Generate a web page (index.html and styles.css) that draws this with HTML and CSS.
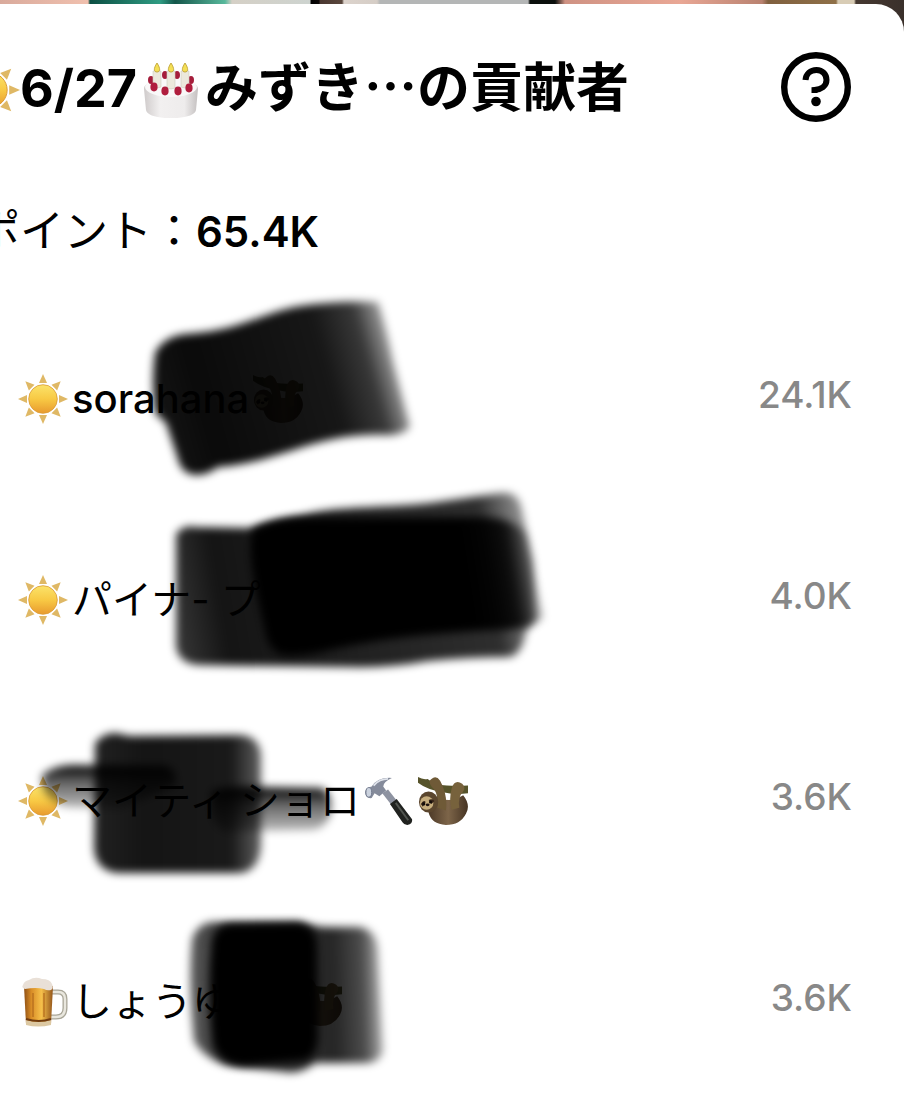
FILE: index.html
```html
<!DOCTYPE html>
<html lang="ja">
<head>
    <meta charset="UTF-8">
    <meta name="viewport" content="width=device-width, initial-scale=1.0">
    <title>貢献者</title>
    <link rel="stylesheet" href="styles.css">
</head>
<body>

    <!-- shared emoji and gradients -->
    <svg class="defs" aria-hidden="true">
        <defs>
            <linearGradient id="sun-face" x1="0" y1="0" x2="0" y2="1">
                <stop offset="0" stop-color="#fbe36a"/>
                <stop offset="0.5" stop-color="#f8c944"/>
                <stop offset="1" stop-color="#e89a2e"/>
            </linearGradient>
            <linearGradient id="beer-fill" x1="0" y1="0" x2="1" y2="0">
                <stop offset="0" stop-color="#8f5015"/>
                <stop offset="0.25" stop-color="#d88c26"/>
                <stop offset="0.6" stop-color="#f6c04a"/>
                <stop offset="1" stop-color="#93551b"/>
            </linearGradient>
            <linearGradient id="cake-side" x1="0" y1="0" x2="1" y2="0">
                <stop offset="0" stop-color="#cfcbcb"/>
                <stop offset="0.3" stop-color="#f2f0f0"/>
                <stop offset="0.75" stop-color="#eeecec"/>
                <stop offset="1" stop-color="#c4c0c0"/>
            </linearGradient>
            <linearGradient id="sloth-body" x1="0" y1="0" x2="1" y2="0">
                <stop offset="0" stop-color="#4d3a28"/>
                <stop offset="0.5" stop-color="#7d6549"/>
                <stop offset="1" stop-color="#463423"/>
            </linearGradient>
            <filter id="soft" x="-20%" y="-40%" width="140%" height="180%">
                <feGaussianBlur stdDeviation="4"/>
            </filter>

            <symbol id="sun" viewBox="0 0 50 50">
                <g fill="#dfb865">
                    <path id="ray" d="M25 0l4 9h-8z"/>
                    <use href="#ray" transform="rotate(45 25 25)"/>
                    <use href="#ray" transform="rotate(90 25 25)"/>
                    <use href="#ray" transform="rotate(135 25 25)"/>
                    <use href="#ray" transform="rotate(180 25 25)"/>
                    <use href="#ray" transform="rotate(225 25 25)"/>
                    <use href="#ray" transform="rotate(270 25 25)"/>
                    <use href="#ray" transform="rotate(315 25 25)"/>
                </g>
                <circle cx="25" cy="25" r="14.3" fill="url(#sun-face)" stroke="#d99a35" stroke-width="0.8"/>
            </symbol>

            <symbol id="cake" viewBox="0 0 56 56">
                <path d="M1 27c0-14 54-14 54 0l-2 21c-1 11-49 11-50 0z" fill="url(#cake-side)"/>
                <ellipse cx="28" cy="25" rx="26" ry="10" fill="#f9f8f8"/>
                <g fill="#a51d3b">
                    <ellipse cx="22" cy="13" rx="3" ry="4"/>
                    <ellipse cx="34" cy="13" rx="3" ry="4"/>
                    <ellipse cx="8" cy="18" rx="3" ry="4"/>
                    <ellipse cx="48" cy="18" rx="3" ry="4"/>
                </g>
                <g fill="#ece9dc" stroke="#cfccc0" stroke-width="0.6">
                    <path d="M10 9h8v16q-4 2-8 0z"/>
                    <path d="M24 9h8v17q-4 2-8 0z"/>
                    <path d="M38 9h8v16q-4 2-8 0z"/>
                </g>
                <g fill="#f4df55" stroke="#b89a2b" stroke-width="0.8">
                    <path d="M14 1c4 6 3 9 0 9s-4-3 0-9z"/>
                    <path d="M28 1c4 6 3 9 0 9s-4-3 0-9z"/>
                    <path d="M42 1c4 6 3 9 0 9s-4-3 0-9z"/>
                </g>
                <g fill="#b01e3e">
                    <ellipse cx="11" cy="25" rx="3.6" ry="4.4"/>
                    <ellipse cx="22" cy="29" rx="3.6" ry="4.4"/>
                    <ellipse cx="35" cy="29" rx="3.6" ry="4.4"/>
                    <ellipse cx="46" cy="26" rx="3.6" ry="4.4"/>
                </g>
            </symbol>

            <symbol id="beer" viewBox="0 0 50 50">
                <path d="M32 15h8q7 0 7 7v9q0 9-9 9h-6" fill="none" stroke="#a9a698" stroke-width="5"/>
                <path d="M32 15h8q7 0 7 7v9q0 9-9 9h-6" fill="none" stroke="#e9e7de" stroke-width="2.4"/>
                <path d="M6 9h29l-2 38q-13 4-25 0z" fill="url(#beer-fill)"/>
                <path d="M8 43q13 4 25 0v5q-13 3-25 0z" fill="#dcc8a2"/>
                <path d="M8 42q13 4 25 0" fill="none" stroke="#6f3b10" stroke-width="2"/>
                <path d="M15 16v24M26 16v24" stroke="#b8701f" stroke-width="1.4"/>
                <path d="M5 8q1-4 6-5 6-4 13-1 8 0 10 5 2 4-1 6-4 1-7-1-8-2-19 0-4-1-2-4z" fill="#e9e0d7"/>
            </symbol>

            <symbol id="hammer" viewBox="0 0 52 52">
                <path d="M19 18l6-4 11 14-6 4z" fill="#8e93a1"/>
                <path d="M27 29l7-5 16 21q1 5-5 6-3 0-5-3z" fill="#20221f"/>
                <path d="M33 28l13 18" stroke="#515550" stroke-width="2"/>
                <path d="M8 11Q14 1 29 2q-9 4-9 9l3 4-7 6-5-3-3 5q-6 1-7-6 1-5 7-6z" fill="#858b9b"/>
                <path d="M10 10Q16 3 25 3" fill="none" stroke="#dfe3eb" stroke-width="2"/>
                <ellipse cx="5" cy="17" rx="3" ry="5" fill="#cbd2de" stroke="#70798c"/>
            </symbol>

            <symbol id="sloth" viewBox="0 0 52 52">
                <path d="M0 1q5 3 10 2 7 6 20 7 10 1 22 0v8q-14 2-26-1Q9 14 0 7z" fill="#56532a"/>
                <path d="M20 20q10 10 27 0 8 10 3 19-6 12-21 12-15-1-18-13z" fill="url(#sloth-body)"/>
                <path d="M14 3q-4 2 0 8 8 7 6 22l9 3q2-17-6-31-4-6-9-2z" fill="#6f5a37"/>
                <path d="M46 8q-8-5-11 5-3 10 0 22l8-2q-2-11 4-17 3-4-1-8z" fill="#77623c"/>
                <ellipse cx="11" cy="27" rx="10" ry="11" fill="#5b462e"/>
                <ellipse cx="9" cy="28" rx="7" ry="7" fill="#c6ad7d"/>
                <path d="M3 29q3-5 5-2l-3 5zM11 25q4-2 6 1l-3 3z" fill="#352318"/>
                <circle cx="6" cy="29" r="1.6" fill="#130c08"/>
                <circle cx="13" cy="27" r="1.6" fill="#130c08"/>
                <ellipse cx="10" cy="30" rx="2" ry="1.5" fill="#21140f"/>
            </symbol>
        </defs>
    </svg>

    <main class="sheet">
        <header class="header">
            <h1 class="title">
                <svg class="title-sun"><use href="#sun"/></svg>
                <span>6/27</span>
                <svg class="title-cake"><use href="#cake"/></svg>
                <span class="title-name">みずき…の貢献者</span>
            </h1>
            <button class="help" type="button" aria-label="ヘルプ">
                <svg viewBox="0 0 70 70" fill="none" stroke="#000">
                    <circle cx="35" cy="35" r="31.8" stroke-width="6.4"/>
                    <path d="M24.500 28C25 22 29.500 18 35.500 18S45.500 22.500 45.500 28C45.500 34 40 37.500 33.500 38L33.500 41" stroke-width="6"/>
                    <circle cx="35" cy="49.500" r="4.800" fill="#000" stroke="none"/>
                </svg>
            </button>
        </header>

        <p class="points">ポイント：<strong>65.4K</strong></p>

        <ul class="list">
            <li class="row">
                <span class="name">
                    <svg class="emoji"><use href="#sun"/></svg>
                    <span>sorahana</span>
                    <svg class="emoji"><use href="#sloth"/></svg>
                </span>
                <span class="value">24.1K</span>
                <svg class="marker" viewBox="0 297 560 201">
                    <defs>
                        <linearGradient id="fade-1" gradientUnits="userSpaceOnUse" x1="155" y1="420" x2="402" y2="351">
                            <stop offset="0" stop-opacity="0.92"/>
                            <stop offset="0.2" stop-opacity="0.96"/>
                            <stop offset="0.7" stop-opacity="0.91"/>
                            <stop offset="0.86" stop-opacity="0.78"/>
                            <stop offset="1" stop-opacity="0.25"/>
                        </linearGradient>
                    </defs>
                    <path filter="url(#soft)" fill="url(#fade-1)" d="M155 352Q163 336 185 333C240 330 260 312 300 305Q340 299 378 301Q386 325 393 360L410 426Q402 435 385 434C330 432 300 449 260 459Q235 465 218 466Q203 477 190 473Q180 470 177 455L166 422L155 412Q151 380 155 352z"/>
                </svg>
            </li>
            <li class="row">
                <span class="name">
                    <svg class="emoji"><use href="#sun"/></svg>
                    <span class="kana">パイナ- プ</span>
                </span>
                <span class="value">4.0K</span>
                <svg class="marker" viewBox="0 498 560 201">
                    <defs>
                        <linearGradient id="fade-2" gradientUnits="userSpaceOnUse" x1="175" y1="600" x2="540" y2="540">
                            <stop offset="0" stop-opacity="0.8"/>
                            <stop offset="0.12" stop-opacity="0.92"/>
                            <stop offset="0.85" stop-opacity="0.82"/>
                            <stop offset="1" stop-opacity="0.3"/>
                        </linearGradient>
                        <linearGradient id="fade-2b" gradientUnits="userSpaceOnUse" x1="470" y1="590" x2="540" y2="579">
                            <stop offset="0" stop-opacity="1"/>
                            <stop offset="0.6" stop-opacity="0.85"/>
                            <stop offset="1" stop-opacity="0.2"/>
                        </linearGradient>
                    </defs>
                    <path filter="url(#soft)" fill="url(#fade-2)" d="M176 533Q184 523 195 526L250 527Q275 518 303 514C340 504 390 507 430 502L500 492Q517 490 521 505L533 560L535 620L526 630Q522 655 508 656Q470 656 428 660Q390 667 350 666L200 664Q178 663 176 645z"/>
                    <path filter="url(#soft)" fill="url(#fade-2b)" d="M252 530Q270 518 303 517L480 516Q517 517 526 535L543 617Q525 630 500 629C420 632 370 640 330 649Q305 656 282 654Q270 650 266 635L256 590Q248 550 252 530z"/>
                </svg>
            </li>
            <li class="row">
                <span class="name">
                    <svg class="emoji"><use href="#sun"/></svg>
                    <span class="kana">マイティ ショロ</span>
                    <svg class="emoji"><use href="#hammer"/></svg>
                    <svg class="emoji"><use href="#sloth"/></svg>
                </span>
                <span class="value">3.6K</span>
                <svg class="marker" viewBox="0 699 560 201">
                    <defs>
                        <linearGradient id="fade-3" x1="0" y1="0" x2="1" y2="0">
                            <stop offset="0" stop-opacity="0.87"/>
                            <stop offset="0.3" stop-opacity="0.92"/>
                            <stop offset="0.82" stop-opacity="0.9"/>
                            <stop offset="1" stop-opacity="0.62"/>
                        </linearGradient>
                        <linearGradient id="fade-arm" x1="0" y1="0" x2="0" y2="1">
                            <stop offset="0" stop-opacity="1"/>
                            <stop offset="0.4" stop-opacity="0.6"/>
                            <stop offset="1" stop-opacity="0.25"/>
                        </linearGradient>
                    </defs>
                    <path filter="url(#soft)" fill="url(#fade-arm)" d="M42 774Q55 764 72 764L165 765Q178 768 175 785L120 808L65 806Q40 797 42 774z"/>
                    <path filter="url(#soft)" fill="url(#fade-arm)" d="M212 790Q225 785 260 786L320 787Q333 790 331 812Q325 828 312 829L225 831Q208 824 212 790z"/>
                    <path filter="url(#soft)" fill="url(#fade-3)" d="M95 742Q104 731 116 732L130 735L240 734Q260 735 261 755L261 845Q259 870 240 872L118 872Q96 870 94 848z"/>
                </svg>
            </li>
            <li class="row">
                <span class="name">
                    <svg class="emoji"><use href="#beer"/></svg>
                    <span class="kana covered">しょうゆ</span>
                    <svg class="emoji"><use href="#sloth"/></svg>
                </span>
                <span class="value">3.6K</span>
                <svg class="marker" viewBox="0 900 560 201">
                    <defs>
                        <linearGradient id="fade-4" gradientUnits="userSpaceOnUse" x1="190" y1="990" x2="382" y2="984">
                            <stop offset="0" stop-opacity="0.65"/>
                            <stop offset="0.2" stop-opacity="0.8"/>
                            <stop offset="0.75" stop-opacity="0.85"/>
                            <stop offset="0.9" stop-opacity="0.7"/>
                            <stop offset="1" stop-opacity="0.3"/>
                        </linearGradient>
                    </defs>
                    <path filter="url(#soft)" fill="url(#fade-4)" d="M192 938Q198 921 215 921L300 921Q315 926 330 926L358 926Q377 928 378 950L383 1050Q380 1062 365 1062L315 1062Q300 1074 285 1071L225 1064Q203 1056 194 1040Q188 980 192 938z"/>
                    <path filter="url(#soft)" d="M212 942Q214 924 232 923L298 922Q317 925 317 945L318 1038Q316 1059 300 1060L245 1065Q222 1065 213 1045Q207 990 212 942z"/>
                </svg>
            </li>
        </ul>
    </main>

</body>
</html>
```
FILE: styles.css
```css
* {
    box-sizing: border-box;
    margin: 0;
    padding: 0;
}

/* sliver of the live video that shows above the sheet */
body {
    padding-top: 4px;
    color: #000;
    font-family: Inter, "Noto Sans CJK JP", sans-serif;
    background: linear-gradient(90deg,
        #d9aa9c 0, #f0c0ae 88px,
        #0c4f43 90px, #2f9c83 160px, #14564a 175px, #58b99c 225px,
        #d5d0c6 232px, #cdd3cf 310px,
        #000 311px, #0c0808 319px,
        #4a3730 320px, #5a473d 342px,
        #dcd3cc 344px, #d5cdc6 377px,
        #b4b6b6 380px, #b4b6b6 528px,
        #0b0f0d 530px, #0b0f0d 555px,
        #cf9283 565px, #e9a795 680px, #b98270 762px,
        #80603f 768px, #8f7048 836px,
        #d8ccb5 838px, #d8ccb5 854px,
        #453830 856px, #3a302b 100%);
}

.defs {
    position: absolute;
    width: 0;
    height: 0;
}

.sheet {
    min-height: calc(100vh - 4px);
    padding-top: 45px;
    overflow: hidden;
    background-color: #fff;
    border-top-right-radius: 28px;
}

/* Header */
.header {
    display: flex;
    align-items: center;
    justify-content: space-between;
    padding-right: 53px;
}

.title {
    display: flex;
    align-items: baseline;
    margin-left: -40px;
    font-size: 52px;
    line-height: 70px;
    font-weight: 700;
    white-space: nowrap;
}

.title svg {
    align-self: center;
    margin-top: 6px;
}

.title-sun {
    width: 60px;
    height: 60px;
}

.title-cake {
    width: 56px;
    height: 56px;
    margin: 0 6px;
}

.title-name {
    font-family: "Noto Sans CJK JP", sans-serif;
    font-size: 53px;
}

.help {
    width: 70px;
    height: 70px;
    border: none;
    background: none;
    cursor: pointer;
}

.help svg {
    display: block;
}

/* Total */
.points {
    margin: 77px 0 36px -24px;
    font-size: 44px;
    line-height: 60px;
    white-space: nowrap;
}

.points strong {
    font-size: 42px;
    font-weight: 600;
}

/* Contributors */
.list {
    list-style: none;
}

.row {
    position: relative;
    display: flex;
    align-items: center;
    justify-content: space-between;
    height: 201px;
    padding: 0 52px 0 18px;
}

.name {
    display: flex;
    align-items: center;
    gap: 4px;
    font-size: 40px;
    font-weight: 500;
    white-space: pre;
}

.kana {
    padding-bottom: 6px;
    font-weight: 400;
}

.emoji {
    width: 50px;
    height: 50px;
}

.covered {
    min-width: 216px;
}

.value {
    padding-bottom: 8px;
    color: #888;
    font-size: 37px;
    font-weight: 500;
}

/* black marker over the names */
.marker {
    position: absolute;
    top: 0;
    left: 0;
    width: 560px;
    height: 201px;
    overflow: visible;
    pointer-events: none;
}
```
